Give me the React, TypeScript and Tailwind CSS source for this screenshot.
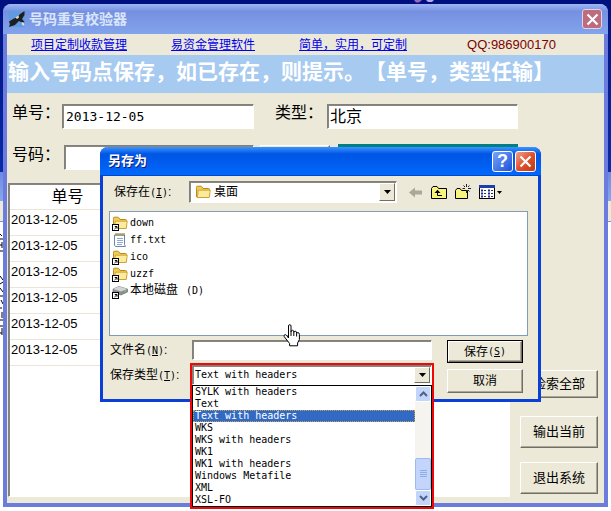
import type { ReactNode } from 'react';

const dates = ['2013-12-05', '2013-12-05', '2013-12-05', '2013-12-05', '2013-12-05', '2013-12-05'];

const formats = [
  'SYLK with headers',
  'Text',
  'Text with headers',
  'WKS',
  'WKS with headers',
  'WK1',
  'WK1 with headers',
  'Windows Metafile',
  'XML',
  'XSL-FO',
];

const FolderShape = () => (
  <>
    <path d="M1.5 4.5 L1.5 12 Q1.5 13.5 3 13.5 L13.5 13.5 Q14.5 13.5 14.5 12.5 L14.5 5.5 Q14.5 4.5 13.5 4.5 L8 4.5 L6.8 2.7 Q6.5 2.2 5.8 2.2 L2.5 2.2 Q1.5 2.2 1.5 3.2 Z" fill="#f2cb52" stroke="#b98a1c" />
    <path d="M3.4 6.2 H15.3 L14.4 12.5 Q14.2 13.5 13.2 13.5 H2.3 Z" fill="#fdeb9c" stroke="#c69a2c" strokeWidth="0.8" />
  </>
);

const ShortcutMark = () => (
  <>
    <rect x="0.5" y="9.5" width="6" height="6" fill="#fff" stroke="#000" />
    <path d="M2.5 14 L4.8 11.8 M2.8 11.5 H5 V13.7" fill="none" stroke="#000" />
  </>
);

const FolderIcon = ({ shortcut = false }: { shortcut?: boolean }) => (
  <svg className="size-4 shrink-0" viewBox="0 0 16 16">
    <FolderShape />
    {shortcut && <ShortcutMark />}
  </svg>
);

const NotepadIcon = () => (
  <svg className="size-4 shrink-0" viewBox="0 0 16 16">
    <path d="M2.5 3 H12.5 V12.5 L13.5 14.5 H3.5 L2.5 13 Z" fill="#fff" stroke="#6e86a8" />
    <path d="M5 6.5 H11 M5 8.5 H11 M5 10.5 H11 M5 12.5 H10" stroke="#8aa7d8" />
    <path d="M4 1 V4 M6 1 V4 M8 1 V4 M10 1 V4 M12 1 V4" stroke="#8a7430" />
  </svg>
);

const DiskIcon = () => (
  <svg className="size-4 shrink-0" viewBox="0 0 16 16">
    <path d="M1 6 L7 3.5 L15.5 6 V9 L9 12 L1 9 Z" fill="#8e8e92" stroke="#66666a" strokeWidth="0.6" />
    <path d="M1 6 L7 3.5 L15.5 6 L9 8.6 Z" fill="#d4d4d8" />
    <circle cx="13.3" cy="8.4" r="0.8" fill="#5fd85f" />
    <ShortcutMark />
  </svg>
);

const EagleIcon = () => (
  <svg className="size-4" viewBox="0 0 16 16">
    <rect width="16" height="16" fill="#5f9be0" />
    <path d="M0 10.5 L5 7.5 L8 6.5 L11 3 L15.5 0 V4 L13 8 L15.5 11 L13 11.5 L10 10 L6 14 L0 16 L1 13 Z" fill="#1f1e22" />
    <path d="M6.5 6.5 L9.5 4.5 L10 6.5 L8 8 Z" fill="#e9dcc0" />
    <path d="M12.5 11 L15 12 L15.5 15 L13 14 Z" fill="#ded8cc" />
  </svg>
);

const CrossIcon = () => (
  <svg className="size-[13px]" viewBox="0 0 13 13">
    <path d="M1.5 1.5 L11.5 11.5 M11.5 1.5 L1.5 11.5" stroke="#fff" strokeWidth="2.2" />
  </svg>
);

const HandCursor = () => (
  <svg className="absolute left-[180px] top-[177px] w-[18px] h-[23px] pointer-events-none" viewBox="0 0 18 23">
    <path
      d="M5.5 14 V2 Q5.5 0.7 6.7 0.7 Q8 0.7 8 2 V8 Q8 6.2 9.3 6.2 Q10.8 6.2 10.8 8 V8.6 Q11 7.2 12.2 7.2 Q13.6 7.2 13.6 9 V9.6 Q13.8 8.6 14.9 8.6 Q16.4 8.6 16.4 10.5 V15.5 L14.6 19 V21.8 H6.6 V19.5 L1.2 12.6 Q0.7 10.8 2.2 10.6 Q3.4 10.6 5.5 14 Z"
      fill="#fff"
      stroke="#000"
    />
    <path d="M8 8 V12 M10.8 8.6 V12 M13.6 9.6 V12.5" stroke="#000" />
  </svg>
);

const Key = ({ letter }: { letter: string }) => (
  <span className="font-['DejaVu_Sans_Mono',monospace] text-[10px]">
    (<u>{letter}</u>)
  </span>
);

const RaisedButton = ({ children, className = '' }: { children: ReactNode; className?: string }) => (
  <button
    type="button"
    className={`bg-[#ece9d8] border border-t-white border-l-white border-r-[#716f64] border-b-[#716f64] shadow-[inset_-1px_-1px_0_#aca899] flex items-center justify-center ${className}`}
  >
    {children}
  </button>
);

const ComboArrow = () => (
  <span className="absolute right-[2px] inset-y-[2px] w-4 flex items-center justify-center bg-[#ece9d8] border border-t-white border-l-white border-r-[#716f64] border-b-[#716f64] pointer-events-none">
    <svg className="w-[7px] h-1" viewBox="0 0 7 4">
      <path d="M0 0 H7 L3.5 4 Z" fill="#000" />
    </svg>
  </span>
);

const sunken = 'bg-white border border-t-[#808080] border-l-[#808080] border-r-white border-b-white shadow-[inset_1px_1px_0_#8a877a] outline-none';

const Backdrop = () => (
  <div className="absolute inset-0 flex flex-col bg-white">
    <div className="h-[172px] bg-linear-to-b from-[#00107e] to-[#0a2ba8]" />
    <div className="h-[29px] bg-linear-to-b from-[#6d8be2] to-[#86a8ee]" />
    <div className="h-5 bg-[#ece9d8]" />
    <div className="h-px bg-[#7f8fd8]" />
    <svg className="mt-3 w-[3px] h-[105px]" viewBox="0 0 3 105">
      <path d="M0 0 L2 2 M0 5 H3 M2 8 V14 M0 11 H2 M0 17 H3 M0 42 L3 46 M0 50 L3 48 M0 54 L3 58 M0 62 H3 M1 66 L3 70 M0 74 H2 M2 78 V84 M0 86 H3 M0 92 H3 M2 94 V101 M0 99 H2" stroke="#000" />
    </svg>
    <svg className="absolute left-[412px] top-0 w-6 h-1" viewBox="0 0 24 4">
      <path d="M2 0 H10 L7 2.5 H4 Z" fill="#9a68c0" />
      <path d="M14 0 H22 L20 2 H16 Z" fill="#b9a8e8" />
    </svg>
  </div>
);

const SaveDialog = () => (
  <section
    aria-label="另存为"
    className="absolute left-[100px] top-[147px] w-[441px] h-[255px] rounded-t-lg border-x-[3px] border-b-[3px] border-[#0a3fd8] bg-[#ece9d8] text-xs"
  >
    <header className="-mx-[3px] h-[29px] pl-2 pr-[5px] flex items-center rounded-t-lg bg-linear-to-b from-[#3a93ff] via-[#0055e4] via-25% to-[#0068fc] border-b border-[#0048c8]">
      <h2 className="flex-1 text-[13px] font-bold text-white [text-shadow:1px_1px_0_#0a1f80]">另存为</h2>
      <button type="button" aria-label="帮助" className="size-[21px] mr-[2px] rounded-[3px] border border-white bg-linear-to-br from-[#7aa4f8] to-[#1c4fd8] text-white text-lg leading-none font-bold flex items-center justify-center">
        ?
      </button>
      <button type="button" aria-label="关闭" className="size-[21px] rounded-[3px] border border-white bg-linear-to-br from-[#f0a088] via-[#e0502c] to-[#c03a14] flex items-center justify-center">
        <CrossIcon />
      </button>
    </header>

    <div className="pt-[5px] pl-[11px] flex items-center">
      <label htmlFor="place" className="w-[75px] whitespace-nowrap">
        保存在<Key letter="I" />:
      </label>
      <div className="relative w-[208px] h-[22px]">
        <select id="place" className={`appearance-none w-full h-full pl-6 ${sunken}`}>
          <option>桌面</option>
        </select>
        <span className="absolute left-[6px] top-[3px]">
          <FolderIcon />
        </span>
        <ComboArrow />
      </div>
      <div className="flex items-center gap-2 pl-3">
        <button type="button" aria-label="后退">
          <svg className="w-[14px] h-[15px]" viewBox="0 0 14 15">
            <path d="M0 7.5 L6 2.5 V5.5 H13 V9.5 H6 V12.5 Z" fill="#aca899" />
          </svg>
        </button>
        <button type="button" aria-label="向上">
          <svg className="w-4 h-[15px]" viewBox="0 0 16 15">
            <path d="M0.5 13.5 V3.5 L2 1.5 H6 L7.5 3.5 H15.5 V13.5 Z" fill="#f8f47c" stroke="#000" />
            <path d="M11 10.5 H6.5 V6" fill="none" stroke="#000" />
            <path d="M3.5 8 L6.5 4.8 L9.5 8 Z" fill="#000" />
          </svg>
        </button>
        <button type="button" aria-label="新建文件夹">
          <svg className="w-4 h-4" viewBox="0 0 16 16">
            <path d="M0.5 14.5 V6.5 L2 4.5 H5 L6.5 6.5 H12.5 V14.5 Z" fill="#f8f47c" stroke="#000" />
            <path d="M11.5 0 V3 M11.5 6 V9 M7.5 4.5 H10 M13 4.5 H16 M8.5 1.5 L10 3 M14.5 1.5 L13 3 M14.5 7.5 L13 6" stroke="#222" />
          </svg>
        </button>
        <button type="button" aria-label="查看" className="flex items-center gap-[2px]">
          <svg className="w-4 h-[15px]" viewBox="0 0 16 15">
            <rect x="0.5" y="0.5" width="15" height="13" fill="#fff" stroke="#000" />
            <path d="M0 1.5 H16" stroke="#1c3fa8" strokeWidth="3" />
            <path d="M2 5.5 H4 M2 8.5 H4 M2 11.5 H4 M9 5.5 H11 M9 8.5 H11 M9 11.5 H11" stroke="#1c2fa0" strokeWidth="2" />
            <path d="M5 5.5 H7 M5 8.5 H7 M5 11.5 H7 M12 5.5 H14 M12 8.5 H14 M12 11.5 H14" stroke="#333" />
          </svg>
          <svg className="w-[5px] h-[3px]" viewBox="0 0 5 3">
            <path d="M0 0 H5 L2.5 3 Z" fill="#000" />
          </svg>
        </button>
      </div>
    </div>

    <ul className="mt-2 ml-[6px] mr-[10px] h-[125px] pt-[2px] pl-[2px] bg-white border border-[#7f9db9] font-['DejaVu_Sans_Mono','Noto_Sans_CJK_SC',monospace] text-[10px] leading-[17px]">
      <li className="flex items-center gap-[2px]"><FolderIcon shortcut />down</li>
      <li className="flex items-center gap-[2px]"><NotepadIcon />ff.txt</li>
      <li className="flex items-center gap-[2px]"><FolderIcon shortcut />ico</li>
      <li className="flex items-center gap-[2px]"><FolderIcon shortcut />uzzf</li>
      <li className="flex items-center gap-[2px]">
        <DiskIcon />
        <span className="text-xs leading-[17px]">本地磁盘</span>
        <span className="pl-[6px]">(D)</span>
      </li>
    </ul>

    <div className="pt-1 pl-[7px] flex">
      <div className="flex flex-col gap-[5px]">
        <div className="flex items-center">
          <label htmlFor="filename" className="w-[82px] whitespace-nowrap">
            文件名<Key letter="N" />:
          </label>
          <input id="filename" type="text" className={`w-[240px] h-5 px-1 ${sunken}`} />
        </div>
        <div className="flex items-center">
          <label htmlFor="filetype" className="w-[82px] whitespace-nowrap">
            保存类型<Key letter="T" />:
          </label>
          <div className="relative w-[240px] h-5">
            <select
              id="filetype"
              defaultValue="Text with headers"
              className={`appearance-none w-full h-full pl-[2px] font-['DejaVu_Sans_Mono',monospace] text-[10px] ${sunken}`}
            >
              {formats.map((format) => (
                <option key={format}>{format}</option>
              ))}
            </select>
            <ComboArrow />
            <div className="absolute top-full left-0 w-[240px] flex bg-white border border-black">
              <ul role="listbox" aria-label="保存类型" className="flex-1 font-['DejaVu_Sans_Mono',monospace] text-[10px] leading-3">
                {formats.map((format) => (
                  <li
                    key={format}
                    role="option"
                    aria-selected={format === 'Text with headers'}
                    className={
                      format === 'Text with headers'
                        ? 'pl-[2px] bg-[#316ac5] text-white outline-1 -outline-offset-1 outline-dotted outline-[#d0a050]'
                        : 'pl-[2px]'
                    }
                  >
                    {format}
                  </li>
                ))}
              </ul>
              <div className="w-4 flex flex-col bg-[#f5f4ee]">
                <button type="button" aria-label="向上滚动" className="h-4 rounded-xs border border-white bg-[#c4d5fc] flex items-center justify-center">
                  <svg className="w-[9px] h-[6px]" viewBox="0 0 9 6">
                    <path d="M1 5 L4.5 1.5 L8 5" fill="none" stroke="#4d6185" strokeWidth="2" />
                  </svg>
                </button>
                <div className="flex-1" />
                <div className="h-8 rounded-xs border border-[#9fb8f0] bg-[#c4d5fc] flex items-center justify-center">
                  <svg className="w-[7px] h-[8px]" viewBox="0 0 7 8">
                    <path d="M0 0.5 H7 M0 2.5 H7 M0 4.5 H7 M0 6.5 H7" stroke="#8fabe8" />
                  </svg>
                </div>
                <button type="button" aria-label="向下滚动" className="h-4 rounded-xs border border-white bg-[#c4d5fc] flex items-center justify-center">
                  <svg className="w-[9px] h-[6px]" viewBox="0 0 9 6">
                    <path d="M1 1 L4.5 4.5 L8 1" fill="none" stroke="#4d6185" strokeWidth="2" />
                  </svg>
                </button>
              </div>
            </div>
            <div className="absolute -top-[2px] -inset-x-[2px] h-[146px] border-2 border-[#f00808] pointer-events-none" />
          </div>
        </div>
      </div>
      <div className="pl-[15px] flex flex-col gap-[6px]">
        <div className="border border-black">
          <RaisedButton className="w-[74px] h-[21px]">
            保存<Key letter="S" />
          </RaisedButton>
        </div>
        <RaisedButton className="w-[76px] h-6">取消</RaisedButton>
      </div>
    </div>
    <HandCursor />
  </section>
);

const App = () => {
  return (
    <div className="relative min-h-screen flex flex-col px-[3px] py-1 text-black font-['Liberation_Sans','Noto_Sans_CJK_SC',sans-serif]">
      <Backdrop />
      <main className="relative flex-1 flex flex-col rounded-t-lg border-x-4 border-b-4 border-[#6b7cdc] bg-[#ece9d8]">
        <header className="-mx-1 h-[30px] pl-[6px] pr-[6px] flex items-center gap-1 rounded-t-lg bg-linear-to-b from-[#9db6f4] via-[#7690e0] via-25% to-[#82a4ec]">
          <EagleIcon />
          <h1 className="flex-1 text-sm font-bold text-[#dbe6fa]">号码重复校验器</h1>
          <button type="button" aria-label="关闭" className="size-5 rounded-[3px] border border-[#e4d4e4] bg-[#bd6c80] flex items-center justify-center">
            <CrossIcon />
          </button>
        </header>

        <nav className="h-[21px] pl-6 flex items-center gap-11 text-xs whitespace-nowrap">
          <a href="#payments" className="text-[#0000f0] underline">项目定制收款管理</a>
          <a href="#funds" className="text-[#0000f0] underline">易资金管理软件</a>
          <a href="#custom" className="text-[#0000f0] underline">简单，实用，可定制</a>
          <span className="pl-4 text-[13px] text-[#800000]">QQ:986900170</span>
        </nav>

        <p className="h-[38px] pb-1 pl-px flex items-center bg-[#a6caf0] text-[21px] font-bold text-white whitespace-nowrap [text-spacing-trim:space-all]">
          输入号码点保存，如已存在，则提示。【单号，类型任输】
        </p>

        <div className="pt-[11px] pl-[5px] flex items-center text-base">
          <label htmlFor="order" className="w-[50px] pb-2 leading-4 whitespace-nowrap">单号：</label>
          <input
            id="order"
            type="text"
            defaultValue="2013-12-05"
            className={`w-[192px] h-[25px] px-[3px] font-['DejaVu_Sans_Mono',monospace] text-[13px] ${sunken}`}
          />
          <label htmlFor="kind" className="ml-[21px] w-[52px] pb-2 leading-4 whitespace-nowrap">类型：</label>
          <input id="kind" type="text" defaultValue="北京" className={`w-[191px] h-[25px] px-[2px] pb-1 ${sunken}`} />
        </div>

        <div className="pt-[15px] pl-[5px] flex items-center text-base">
          <label htmlFor="number" className="w-[52px] pb-1 leading-4 whitespace-nowrap">号码：</label>
          <input id="number" type="text" className={`w-[190px] h-[25px] px-[3px] ${sunken}`} />
          <RaisedButton className="ml-[6px] w-[70px] h-[25px]">{null}</RaisedButton>
          <div className="ml-2 w-[180px] h-[26px] bg-[#008080]" />
        </div>

        <div className="flex-1 pt-[13px] pl-px pr-[6px] pb-[6px] flex gap-[10px]">
          <div className={`flex-1 pl-px pt-px ${sunken}`}>
            <table className="w-[115px] border-collapse">
              <thead>
                <tr className="h-6 border-b border-[#ece4d4]">
                  <th className="p-0 text-base leading-5 font-normal">单号</th>
                </tr>
              </thead>
              <tbody>
                {dates.map((date, i) => (
                  <tr key={i} className="h-[26px] border-b border-[#ece4d4]">
                    <td className="p-0 pl-px pb-1 text-[13px] leading-5">{date}</td>
                  </tr>
                ))}
              </tbody>
            </table>
          </div>
          <div className="w-[78px] pb-[3px] flex flex-col justify-end gap-[14px] text-[13px]">
            <RaisedButton className="h-7 mb-1">检索全部</RaisedButton>
            <RaisedButton className="h-8">输出当前</RaisedButton>
            <RaisedButton className="h-8">退出系统</RaisedButton>
          </div>
        </div>
      </main>
      <SaveDialog />
    </div>
  );
};

export default App;
